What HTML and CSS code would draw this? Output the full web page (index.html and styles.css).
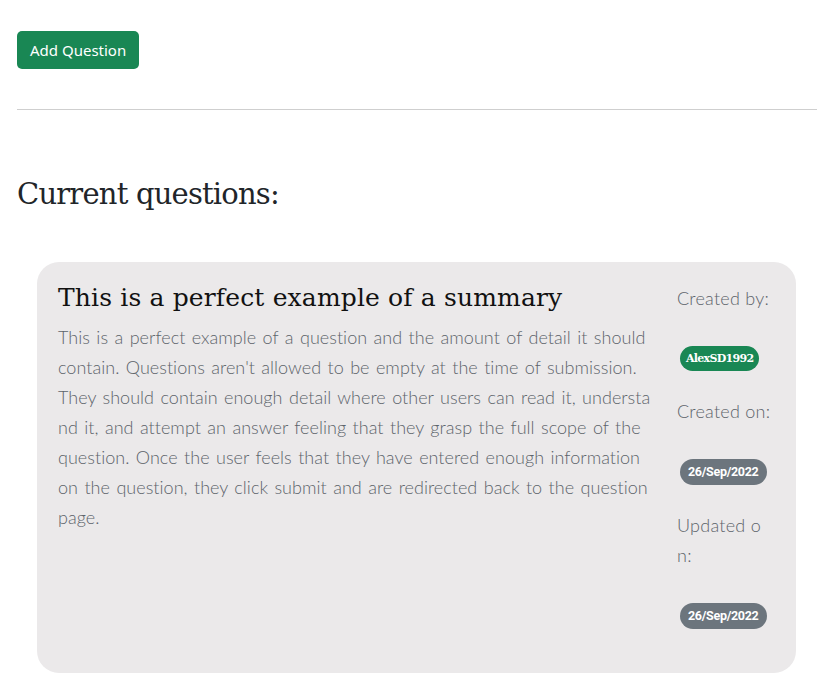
FILE: index.html
```html
<!DOCTYPE html>
<html lang="en">
<head>
<meta charset="utf-8">
<title>Questions</title>
<link rel="stylesheet" href="styles.css">
</head>
<body>
<div class="page">
  <div class="actions">
    <button class="btn-add" type="button">Add Question</button>
  </div>
  <hr class="divider">
  <h2 class="section-title">Current questions:</h2>
  <div class="card">
    <div class="card-main">
      <h3 class="card-title">This is a perfect example of a summary</h3>
      <p class="card-body">This is a perfect example of a question and the amount of detail it should contain. Questions aren't allowed to be empty at the time of submission. They should contain enough detail where other users can read it, understand it, and attempt an answer feeling that they grasp the full scope of the question. Once the user feels that they have entered enough information on the question, they click submit and are redirected back to the question page.</p>
    </div>
    <div class="card-side">
      <div class="meta">
        <p class="meta-label">Created by:</p>
        <span class="badge badge-user">AlexSD1992</span>
      </div>
      <div class="meta">
        <p class="meta-label">Created on:</p>
        <span class="badge badge-date">26/Sep/2022</span>
      </div>
      <div class="meta">
        <p class="meta-label">Updated on:</p>
        <span class="badge badge-date">26/Sep/2022</span>
      </div>
    </div>
  </div>
</div>
</body>
</html>
```
FILE: styles.css
```css
html, body {
  margin: 0;
  padding: 0;
  background: #ffffff;
}
body {
  font-family: Lato, "Open Sans", sans-serif;
  color: #212529;
}
.page {
  padding: 31px 14px 0 17px;
}
.actions {
  display: flex;
}
.btn-add {
  background: #198754;
  color: #ffffff;
  border: none;
  border-radius: 5px;
  height: 38px;
  padding: 0 13px;
  font-family: "Noto Sans", sans-serif;
  font-size: 15px;
  cursor: pointer;
}
.divider {
  margin: 40px 0 0 0;
  border: none;
  border-top: 1px solid #cfcfcf;
  height: 0;
}
.section-title {
  margin: 66px 0 0 0;
  font-family: "DejaVu Serif", serif;
  font-weight: 300;
  font-size: 29px;
  line-height: 36px;
  color: #212529;
  letter-spacing: -0.8px;
}
.card {
  box-sizing: border-box;
  margin: 50px 21px 18px 20px;
  background: #ebe9ea;
  border-radius: 22px;
  padding: 21px 21px 43px 21px;
  display: flex;
  gap: 23px;
  min-height: 411px;
}
.card-main {
  flex: 1;
  min-width: 0;
}
.card-title {
  margin: 0;
  font-family: "DejaVu Serif", serif;
  font-weight: 400;
  font-size: 25px;
  line-height: 30px;
  color: #111;
  letter-spacing: 0.15px;
}
.card-body {
  margin: 9px 0 0 0;
  font-family: Lato, sans-serif;
  font-weight: 300;
  font-size: 18px;
  line-height: 30px;
  color: #5d646b;
  letter-spacing: 0.03px;
  word-spacing: 1.5px;
  word-break: break-all;
}
.card-side {
  box-sizing: border-box;
  width: 100px;
  padding: 0 3px 0 2px;
  display: flex;
  flex-direction: column;
  gap: 25px;
}
.meta {
  display: flex;
  flex-direction: column;
  align-items: flex-start;
}
.meta-label {
  margin: 0;
  width: 100%;
  font-family: Lato, sans-serif;
  font-weight: 300;
  font-size: 18px;
  line-height: 30px;
  color: #5d646b;
  letter-spacing: 0.25px;
  word-break: break-all;
}
.badge {
  margin-top: 33px;
  margin-left: 3px;
  display: inline-block;
  border-radius: 13px;
  padding: 0 8px;
  height: 25px;
  line-height: 25px;
  color: #fff;
  font-weight: 700;
  font-size: 12px;
}
.badge-user {
  background: #198754;
  font-family: "DejaVu Serif", serif;
  font-size: 11px;
  letter-spacing: -0.7px;
  padding: 0 6px;
}
.badge-date {
  background: #6c757d;
  font-family: Roboto, sans-serif;
  font-size: 12.5px;
  letter-spacing: -0.3px;
  height: 26px;
  line-height: 26px;
}
```
